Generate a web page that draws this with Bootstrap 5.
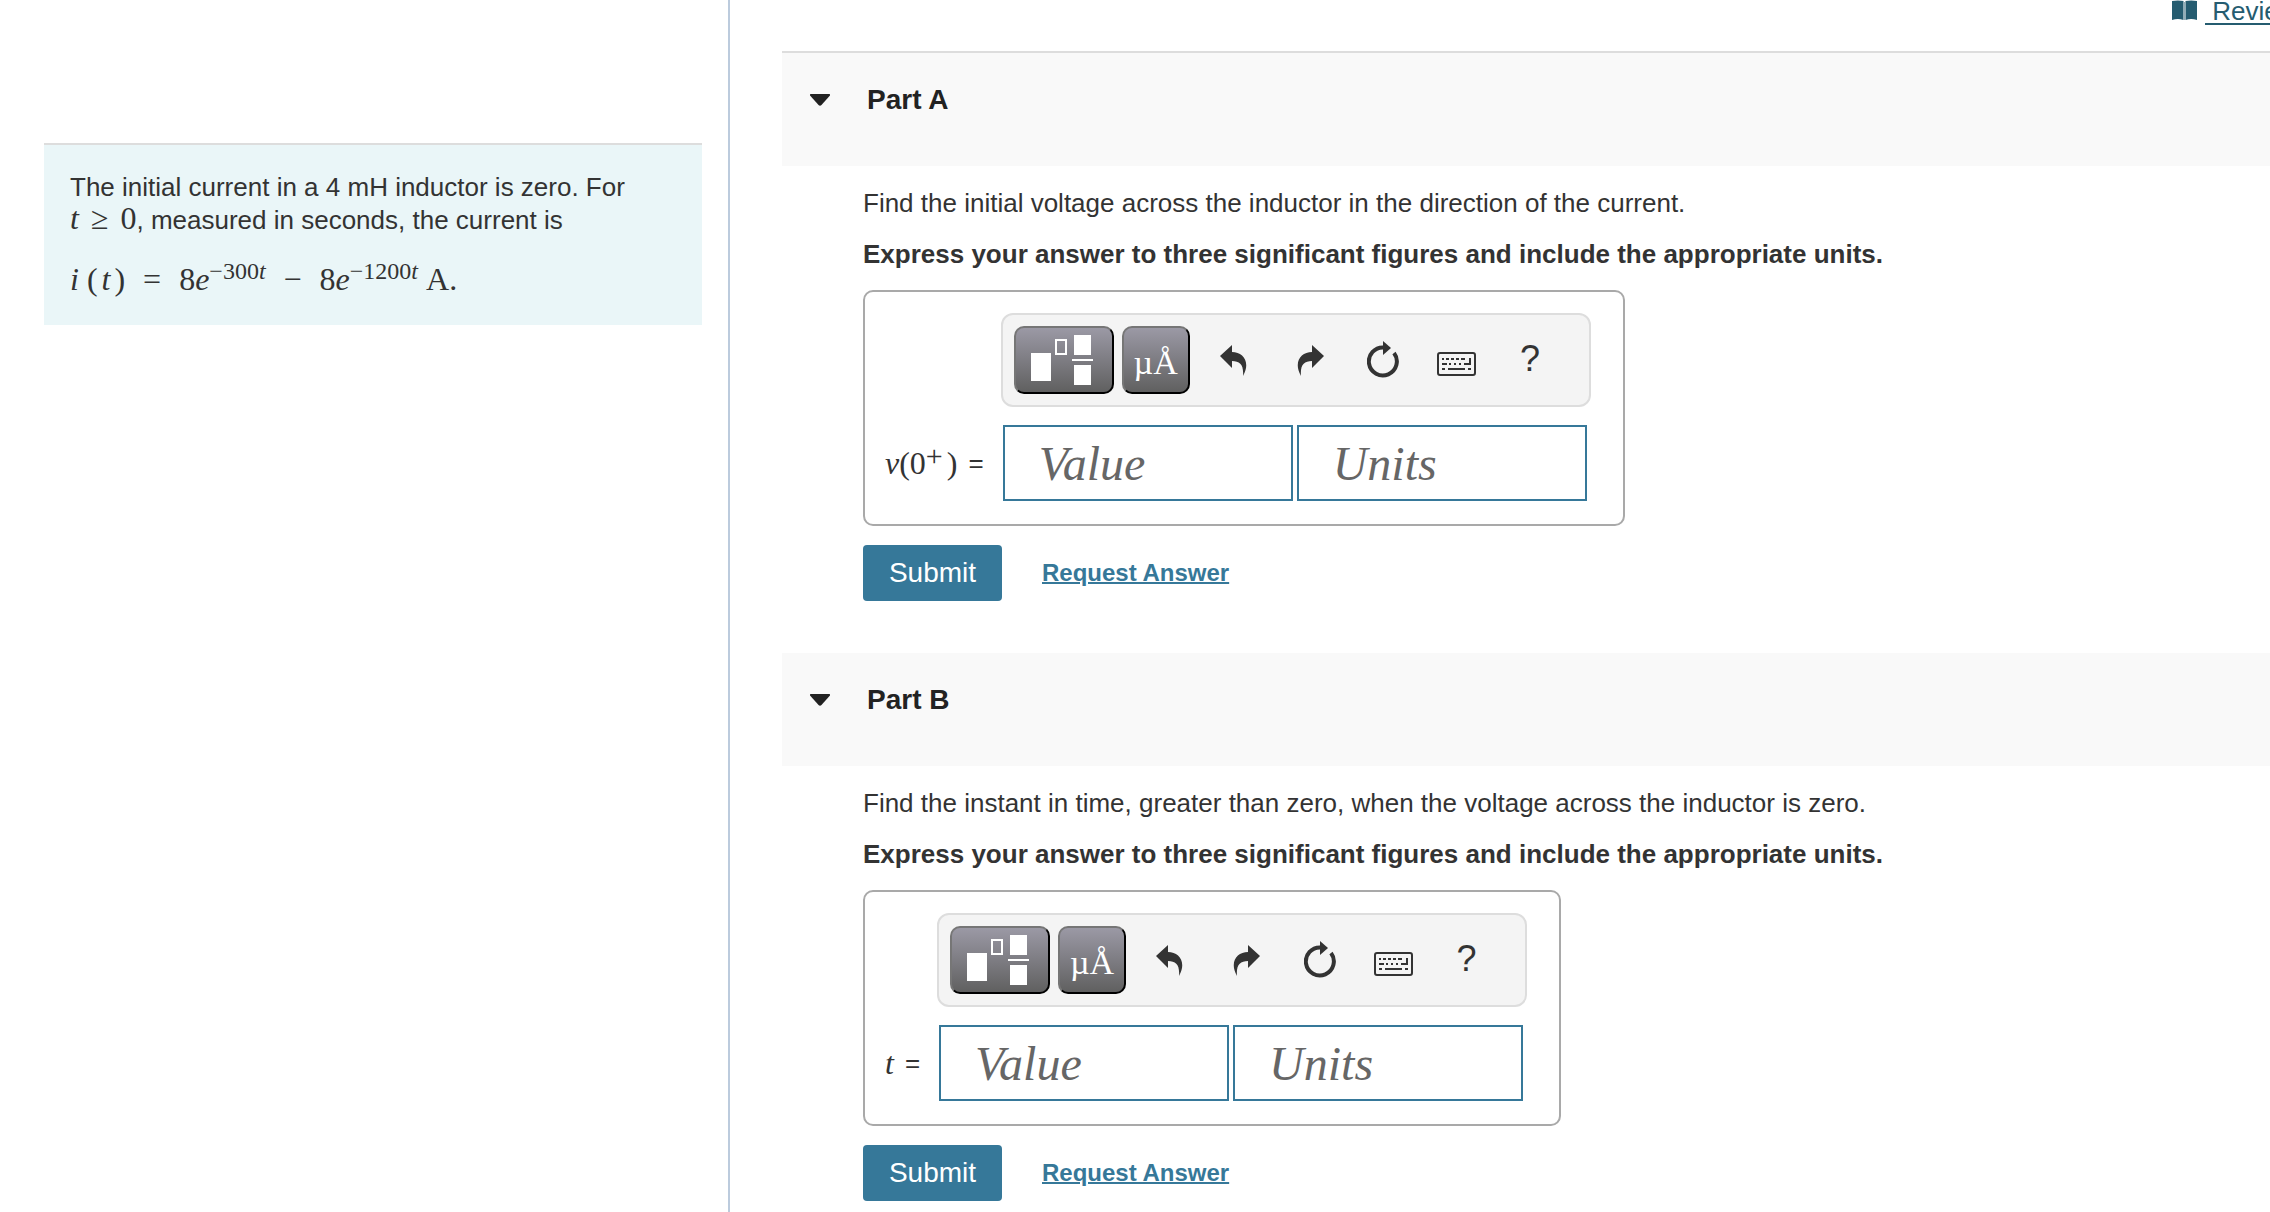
<!DOCTYPE html>
<html lang="en">
<head>
<meta charset="utf-8">
<meta name="viewport" content="width=device-width, initial-scale=1">
<title>Inductor voltage</title>
<link href="https://cdn.jsdelivr.net/npm/bootstrap@5.3.0/dist/css/bootstrap.min.css" rel="stylesheet">
<style>
body { font-family: "Liberation Sans", Arial, sans-serif; font-size: 26px; line-height: 32px; color: #333; }
.app { height: 100vh; }
.pane-problem { flex: 0 0 730px; padding: 143px 26px 0 44px; border-right: 2px solid #bccbdd; }
.problem-box { background: #eaf6f8; border-top: 2px solid #ddd; padding: 26px 26px 24px; height: 182px; }
.pane-parts { padding-left: 52px; min-width: 0; }
.top-links { height: 51px; }
.top-links-inner { width: 98px; gap: 8px; white-space: nowrap; line-height: 22px; }
.top-links a { color: #255c70; text-underline-offset: 3px; text-decoration-thickness: 2px; white-space: pre; }
.top-links svg { flex: none; }
.part-head { background: #f9f9f9; height: 113px; padding: 31px 28px; color: #222; }
.part-first { border-top: 2px solid #ddd; height: 115px; }
.part-head button { gap: 37px; font-size: 28px; font-weight: bold; color: #222; line-height: 32px; }
.part-body { padding: 21px 0 52px 81px; }
.ask { margin-bottom: 19px; }
.ask + .ask { margin-bottom: 20px; }
.answer-box { border: 2px solid #a9a9a9; border-radius: 10px; padding: 21px 32px 23px 20px; margin-bottom: 19px; }
.eq-label { height: 76px; padding-right: 17px; gap: 11px; white-space: nowrap; }
.toolbar { width: 590px; height: 94px; background: #f4f4f4; border: 2px solid #ddd; border-radius: 12px; padding: 0 11px; margin-bottom: 18px; }
.toolbar button { padding: 0; color: #333; border: 0; background: none; }
.toolbar .pad-btn { height: 68px; width: 68px; border: 2px outset #767676; border-color: #767676 #222 #222 #767676; border-radius: 10px; background: linear-gradient(#9b99a5, #606060); color: #fff; font-family: "Liberation Serif", serif; font-size: 34px; margin-right: 6px; padding-top: 6px; }
.toolbar .pad-wide { width: 100px; margin-right: 8px; padding: 0 4px 0 0; }
.toolbar .tool { width: 76px; height: 68px; padding-bottom: 2px; }
.toolbar .tool-mid { width: 71px; }
.toolbar .help { font-size: 36px; }
.fields { gap: 4px; padding-left: 2px; }
.fields input { width: 290px; height: 76px; border: 2px solid #367899; border-radius: 0; padding: 0 0 0 34px; font-family: "Liberation Serif", serif; font-style: italic; font-size: 48px; color: #333; }
.fields input::placeholder { color: #666; opacity: 1; }
.submit { height: 56px; width: 139px; background: #367899; color: #fff; font-size: 28px; border: 0; border-radius: 4px; padding: 0; }
.submit:hover { background: #2b6280; color: #fff; }
.request { color: #367899; font-size: 24px; font-weight: bold; text-decoration-thickness: 2px; }
.math { font-family: "Liberation Serif", serif; font-size: 32px; line-height: 30px; }
.math-row { margin-top: 28px; white-space: nowrap; }
.math .expo { font-family: inherit; font-size: 24px; line-height: 0; position: static; vertical-align: 11px; }
.math .expo-plus { font-size: 30px; vertical-align: 8px; }
.math .op { margin: 0 18px; }
.math .rel { margin: 0 12px; }
</style>
</head>
<body>
<div class="app d-flex overflow-hidden">
  <aside class="pane-problem">
    <div class="problem-box">
      <div>The initial current in a 4 mH inductor is zero. For</div>
      <div><span class="math"><i>t</i><span class="rel">≥</span>0</span>, measured in seconds, the current is</div>
      <div class="math math-row"><i>i</i><span class="ms-2">(<i class="px-1">t</i>)</span><span class="op">=</span><span>8<i>e</i><span class="expo">−300<i>t</i></span></span><span class="op">−</span><span>8<i>e</i><span class="expo">−1200<i>t</i></span></span><span class="ms-2">A.</span></div>
    </div>
  </aside>
  <main class="pane-parts flex-grow-1">
    <nav class="top-links d-flex justify-content-end">
      <div class="top-links-inner d-flex overflow-hidden">
        <svg width="25" height="21" viewBox="0 0 25 21" fill="#255c70" aria-hidden="true"><path d="M0 1Q6 0 11.500 1V20Q6 18 0 20ZM13.500 1Q19 0 25 1V20Q19 18 13.500 20Z"/><path d="M12.500 2V20" stroke="#255c70" stroke-opacity=".5"/></svg>
        <a href="#"> Review</a>
      </div>
    </nav>
    <section>
      <h2 class="part-head part-first m-0">
        <button type="button" class="btn p-0 border-0 d-flex align-items-center"><svg width="20" height="12" viewBox="0 0 20 12" fill="#222" aria-hidden="true"><path d="M1 0H19Q21 0 19.500 2L11.500 11Q10 12.500 8.500 11L.5 2Q-1 0 1 0Z"/></svg>Part A</button>
      </h2>
      <div class="part-body">
        <p class="ask">Find the initial voltage across the inductor in the direction of the current.</p>
        <p class="ask fw-bold">Express your answer to three significant figures and include the appropriate units.</p>
        <div class="d-flex">
          <div class="answer-box d-flex align-items-end">
            <label class="eq-label d-flex align-items-center" for="valueA"><span class="math"><i>v</i>(0<span class="expo expo-plus pe-1">+</span>)</span>=</label>
            <div>
              <div class="toolbar d-flex align-items-center" role="toolbar" aria-label="Answer tools">
                <button type="button" class="pad-btn pad-wide" aria-label="Templates"><svg class="d-block mx-auto" width="62" height="50" viewBox="0 0 62 50" aria-hidden="true"><g fill="#fff"><path d="M0 18H20V46H0ZM43 0H60V20H43ZM43 30H60V50H43ZM41 24H62V26H41Z"/></g><path d="M25 5H35V19H25Z" fill="none" stroke="#fff" stroke-width="2"/></svg></button>
                <button type="button" class="pad-btn" aria-label="Symbols">µÅ</button>
                <button type="button" class="tool" aria-label="Undo"><svg width="28" height="31" viewBox="0 0 28 31" fill="#333"><path d="M0 11L12 0V7C23 7 31 17 23 31C24 20 20 16 12 16V23Z"/></svg></button>
                <button type="button" class="tool" aria-label="Redo"><svg width="28" height="31" viewBox="0 0 28 31" fill="#333"><path d="M28 11L16 0V7C5 7-3 17 5 31C4 20 8 16 16 16V23Z"/></svg></button>
                <button type="button" class="tool tool-mid" aria-label="Reset"><svg width="32" height="37" viewBox="0 0 32 37"><path d="M17 6.500A14 14 0 1 0 27 12" fill="none" stroke="#333" stroke-width="4"/><path d="M16 0L24 7L16 14Z" fill="#333"/></svg></button>
                <button type="button" class="tool" aria-label="Keyboard shortcuts"><svg class="mt-2" width="39" height="24" viewBox="0 0 39 24"><rect x="1" y="1" width="37" height="22" rx="2" fill="none" stroke="#333" stroke-width="2"/><path d="M5 7H28M5 17H8M11 17H28M31 17H34" fill="none" stroke="#333" stroke-width="2"/><path d="M8 6V8M13 6V8M18 6V8M23 6V8" stroke="#f4f4f4" stroke-width="2"/><path d="M5 12H10M12 12H14M17 12H19M22 12H24M27 12H33V6" fill="none" stroke="#333" stroke-width="2"/></svg></button>
                <button type="button" class="tool tool-mid help" aria-label="Help">?</button>
              </div>
              <div class="fields d-flex">
                <input type="text" id="valueA" placeholder="Value">
                <input type="text" aria-label="Units" placeholder="Units">
              </div>
            </div>
          </div>
        </div>
        <div class="d-flex align-items-center">
          <button type="button" class="btn submit">Submit</button>
          <a class="request ms-4 ps-3" href="#">Request Answer</a>
        </div>
      </div>
    </section>
    <section>
      <h2 class="part-head m-0">
        <button type="button" class="btn p-0 border-0 d-flex align-items-center"><svg width="20" height="12" viewBox="0 0 20 12" fill="#222" aria-hidden="true"><path d="M1 0H19Q21 0 19.500 2L11.500 11Q10 12.500 8.500 11L.5 2Q-1 0 1 0Z"/></svg>Part B</button>
      </h2>
      <div class="part-body">
        <p class="ask">Find the instant in time, greater than zero, when the voltage across the inductor is zero.</p>
        <p class="ask fw-bold">Express your answer to three significant figures and include the appropriate units.</p>
        <div class="d-flex">
          <div class="answer-box d-flex align-items-end">
            <label class="eq-label d-flex align-items-center" for="valueB"><span class="math"><i>t</i></span>=</label>
            <div>
              <div class="toolbar d-flex align-items-center" role="toolbar" aria-label="Answer tools">
                <button type="button" class="pad-btn pad-wide" aria-label="Templates"><svg class="d-block mx-auto" width="62" height="50" viewBox="0 0 62 50" aria-hidden="true"><g fill="#fff"><path d="M0 18H20V46H0ZM43 0H60V20H43ZM43 30H60V50H43ZM41 24H62V26H41Z"/></g><path d="M25 5H35V19H25Z" fill="none" stroke="#fff" stroke-width="2"/></svg></button>
                <button type="button" class="pad-btn" aria-label="Symbols">µÅ</button>
                <button type="button" class="tool" aria-label="Undo"><svg width="28" height="31" viewBox="0 0 28 31" fill="#333"><path d="M0 11L12 0V7C23 7 31 17 23 31C24 20 20 16 12 16V23Z"/></svg></button>
                <button type="button" class="tool" aria-label="Redo"><svg width="28" height="31" viewBox="0 0 28 31" fill="#333"><path d="M28 11L16 0V7C5 7-3 17 5 31C4 20 8 16 16 16V23Z"/></svg></button>
                <button type="button" class="tool tool-mid" aria-label="Reset"><svg width="32" height="37" viewBox="0 0 32 37"><path d="M17 6.500A14 14 0 1 0 27 12" fill="none" stroke="#333" stroke-width="4"/><path d="M16 0L24 7L16 14Z" fill="#333"/></svg></button>
                <button type="button" class="tool" aria-label="Keyboard shortcuts"><svg class="mt-2" width="39" height="24" viewBox="0 0 39 24"><rect x="1" y="1" width="37" height="22" rx="2" fill="none" stroke="#333" stroke-width="2"/><path d="M5 7H28M5 17H8M11 17H28M31 17H34" fill="none" stroke="#333" stroke-width="2"/><path d="M8 6V8M13 6V8M18 6V8M23 6V8" stroke="#f4f4f4" stroke-width="2"/><path d="M5 12H10M12 12H14M17 12H19M22 12H24M27 12H33V6" fill="none" stroke="#333" stroke-width="2"/></svg></button>
                <button type="button" class="tool tool-mid help" aria-label="Help">?</button>
              </div>
              <div class="fields d-flex">
                <input type="text" id="valueB" placeholder="Value">
                <input type="text" aria-label="Units" placeholder="Units">
              </div>
            </div>
          </div>
        </div>
        <div class="d-flex align-items-center">
          <button type="button" class="btn submit">Submit</button>
          <a class="request ms-4 ps-3" href="#">Request Answer</a>
        </div>
      </div>
    </section>
  </main>
</div>
<script src="https://cdn.jsdelivr.net/npm/bootstrap@5.3.0/dist/js/bootstrap.bundle.min.js"></script>
</body>
</html>
